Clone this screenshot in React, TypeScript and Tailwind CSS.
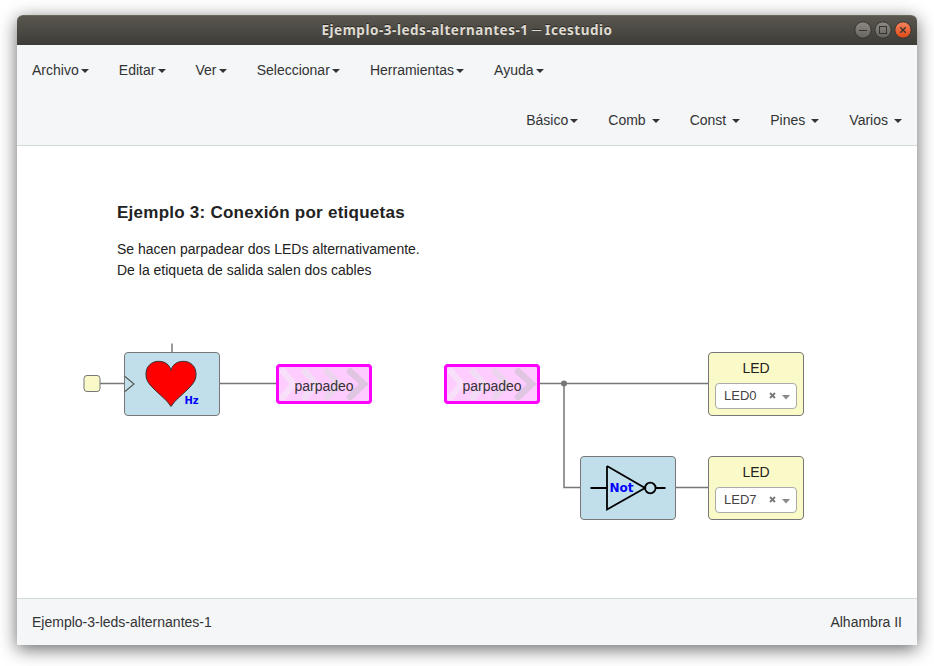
import React from "react";

const menus = ["Archivo", "Editar", "Ver", "Seleccionar", "Herramientas", "Ayuda"];
const collections = ["Básico", "Comb", "Const", "Pines", "Varios"];

function Caret() {
  return (
    <span className="ml-[2.14px] inline-block h-0 w-0 border-x-4 border-t-4 border-x-transparent border-t-[#333] align-middle" />
  );
}

function TitleBar() {
  return (
    <header className="relative flex h-[30px] items-center justify-center rounded-t-[6px] border-t border-[#686a59] bg-linear-to-b from-[#59574f] to-[#3d3c37]">
      <h1 className="-mt-[2px] flex items-center font-['Noto_Sans',sans-serif] text-[13.5px] font-bold tracking-[0.53px] text-[#dfdbd2] [text-shadow:0_-1px_0_#2a2925]">
        Ejemplo-3-leds-alternantes-1
        <span className="mx-[3px] -mt-[2px] text-[10px] font-normal">—</span>
        Icestudio
      </h1>
      <svg className="absolute right-[4px] top-[4px]" width="60" height="20" fill="none">
        <defs>
          <linearGradient id="grey" x2="0" y2="1">
            <stop stopColor="#8c8a82" />
            <stop offset="1" stopColor="#65635b" />
          </linearGradient>
          <linearGradient id="orange" x2="0" y2="1">
            <stop stopColor="#f4845f" />
            <stop offset="1" stopColor="#dd4814" />
          </linearGradient>
        </defs>
        <g stroke="#35342f">
          <circle cx="10" cy="10" r="8.2" fill="url(#grey)" />
          <circle cx="30" cy="10" r="8.2" fill="url(#grey)" />
          <circle cx="50" cy="10" r="8.2" fill="url(#orange)" />
          <path d="M6 10.5H14" />
          <rect x="26.5" y="6.5" width="7" height="7" />
          <path d="M47.300 7.300L52.700 12.700M52.700 7.300L47.300 12.700" strokeWidth="1.3" />
        </g>
      </svg>
    </header>
  );
}

function Wires() {
  return (
    <svg className="absolute inset-0" width="900" height="452" viewBox="17 146 900 452" fill="none">
      <g stroke="#777" strokeWidth="1.5">
        <path d="M100 383.5H124M220 383.5H276M540 383.5H708M676 487.5H708" />
        <path d="M564 383V487.5H580" />
        <path d="M172 343.5V352" />
      </g>
      <circle cx="564" cy="383.5" r="3" fill="#777" />
      <rect x="84" y="375.5" width="16" height="16" rx="3" fill="#fafac8" stroke="#777" />
    </svg>
  );
}

function HeartBlock() {
  return (
    <div className="absolute left-[107px] top-[206px] h-16 w-24 rounded-[4px] border border-[#777] bg-[#c0dfeb]">
      <svg className="-ml-px -mt-px" width="96" height="64" fill="none">
        <path d="M1 24.5L10 32L1 39.5" stroke="#555" strokeWidth="1.1" />
        <path
          d="M47 54.5C43 48 37 44 30 37C24 31 22 28 22 22C22 14 28 9.300 34.500 9.300C41 9.300 46 13 47 18.500C48 13 53 9.300 59.500 9.300C66 9.300 72 14 72 22C72 28 70 31 64 37C57 44 51 48 47 54.500Z"
          fill="#f00"
          stroke="#333"
        />
        <text x="60.500" y="51.700" className="fill-[#00f] font-['DejaVu_Sans',sans-serif] text-[10px] font-bold">
          Hz
        </text>
      </svg>
    </div>
  );
}

function NotBlock() {
  return (
    <div className="absolute left-[563px] top-[310px] h-16 w-24 rounded-[4px] border border-[#777] bg-[#c0dfeb]">
      <svg className="-ml-px -mt-px" width="96" height="64" fill="none">
        <g stroke="#000" strokeWidth="1.8">
          <path d="M10.500 32H27M27 10V53.500L65 32L27 10M76 32H85.500" />
          <circle cx="70.300" cy="32" r="5.300" />
        </g>
        <text x="29.500" y="36" className="fill-[#00f] font-['DejaVu_Sans',sans-serif] text-[12px] font-bold">
          Not
        </text>
      </svg>
    </div>
  );
}

function LabelBlock({ place }: { place: string }) {
  return (
    <div className={`absolute top-[218px] h-10 w-24 rounded-[4px] border-[3px] border-[#f0f] bg-[#ffccff] ${place}`}>
      <svg className="absolute inset-0" width="90" height="34" fill="none" strokeWidth="6.5" strokeLinecap="round">
        <path d="M4 4.500L14.500 17L4 30" stroke="#f8e0fa" />
        <path d="M26 4.500L37 17L26 30" stroke="#f3dcf5" />
        <path d="M48 4.500L60 17L48 30" stroke="#ecd4ee" />
        <path d="M71 4.500L85 17L71 30" stroke="#dfc5e1" />
      </svg>
      <div className="relative pt-[9px] text-center leading-5 text-[#333]">parpadeo</div>
    </div>
  );
}

function LedBlock({ pin, place }: { pin: string; place: string }) {
  return (
    <div className={`absolute left-[691px] h-16 w-24 rounded-[4px] border border-[#777] bg-[#fafac8] ${place}`}>
      <div className="mt-[5px] text-center leading-5 text-[#222]">LED</div>
      <div className="mx-[6px] mt-[5px] flex h-[26px] items-center rounded-[4px] border border-[#aaa] bg-white pl-2 text-[13px] text-[#444]">
        <span className="w-[44px]">{pin}</span>
        <svg width="24" height="12" fill="none">
          <path d="M2 3L7 8M7 3L2 8" stroke="#777" strokeWidth="1.8" />
          <path d="M14 5H22L18 9.500Z" fill="#888" />
        </svg>
      </div>
    </div>
  );
}

export default function App() {
  return (
    <div className="h-[666px] w-[934px] overflow-hidden bg-white pl-[17px] pt-[15px] font-['Liberation_Sans',Arial,sans-serif] text-[14px] leading-5 text-[#333]">
      <main className="flex h-[630px] w-[900px] flex-col rounded-t-[6px] bg-white shadow-[0_4px_18px_rgba(0,0,0,0.6)]">
        <TitleBar />
        <nav className="h-[101px] border-b border-[#d3dada] bg-[#f4f6f8]">
          <ul className="flex">
            {menus.map((name) => (
              <li key={name} className="p-[15px]">
                {name}
                <Caret />
              </li>
            ))}
          </ul>
          <ul className="flex justify-end">
            {collections.map((name, i) => (
              <li key={name} className="p-[15px]">
                {name}
                {i > 0 && " "}
                <Caret />
              </li>
            ))}
          </ul>
        </nav>
        <section className="relative h-[452px] pl-[100px] pt-[57px] text-[#222]">
          <h2 className="text-[17px] font-bold leading-5 tracking-[0.25px]">Ejemplo 3: Conexión por etiquetas</h2>
          <p className="mt-4 leading-[21px]">
            Se hacen parpadear dos LEDs alternativamente.
            <br />
            De la etiqueta de salida salen dos cables
          </p>
          <Wires />
          <HeartBlock />
          <LabelBlock place="left-[259px]" />
          <LabelBlock place="left-[427px]" />
          <NotBlock />
          <LedBlock pin="LED0" place="top-[206px]" />
          <LedBlock pin="LED7" place="top-[310px]" />
        </section>
        <footer className="flex h-[47px] items-center justify-between border-t border-[#d3dada] bg-[#f4f6f8] px-[15px]">
          <span>Ejemplo-3-leds-alternantes-1</span>
          <span>Alhambra II</span>
        </footer>
      </main>
    </div>
  );
}
